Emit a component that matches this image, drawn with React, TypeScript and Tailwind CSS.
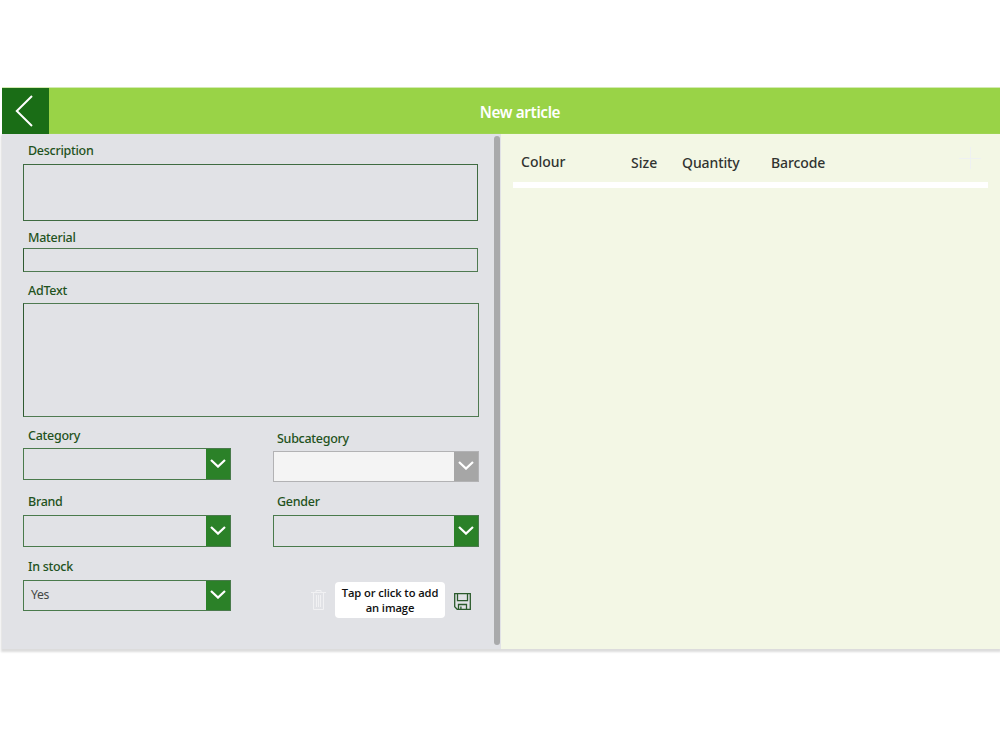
import React from "react";

interface LabelProps {
  text: string;
  className?: string;
}

const Label: React.FC<LabelProps> = ({ text, className = "" }) => {
  return (
    <label
      className={`block h-5 pl-[5px] text-[12.5px] leading-5 font-medium tracking-[-0.28px] text-[#1f5220] whitespace-nowrap ${className}`}
    >
      {text}
    </label>
  );
};

interface DropdownProps {
  value?: string;
  disabled?: boolean;
  className?: string;
}

const Dropdown: React.FC<DropdownProps> = ({
  value = "",
  disabled = false,
  className = "",
}) => {
  return (
    <div
      className={`flex border ${
        disabled ? "border-[#b2b2b4] bg-[#f4f4f4]" : "border-[#4a7a4c]"
      } ${className}`}
    >
      <div className="flex flex-1 items-center pl-[7px] text-[12.2px] tracking-[-0.3px] text-[#444745]">
        {value}
      </div>
      <button
        type="button"
        disabled={disabled}
        className={`flex w-[24px] items-center justify-center ${
          disabled ? "bg-[#a6a6a6]" : "bg-[#2b8128]"
        }`}
      >
        <svg
          className="mb-[2px] h-[9px] w-4"
          viewBox="0 0 16 9"
          fill="none"
          stroke="#ffffff"
          strokeWidth={2.2}
        >
          <path d="M1 1l7 6.6L15 1" />
        </svg>
      </button>
    </div>
  );
};

const Header: React.FC = () => {
  return (
    <header className="flex h-[47px] border-t border-[#d3eab2] bg-[#99d347]">
      <button
        type="button"
        title="Back"
        className="flex w-[47px] items-center justify-center bg-[#1a6d16]"
      >
        <svg
          className="mr-[3px] mb-[1px] h-8 w-[18px]"
          viewBox="0 0 18 32"
          fill="none"
          stroke="#ffffff"
          strokeWidth={2}
        >
          <path d="M17 1L1.8 16L17 31" />
        </svg>
      </button>
      <h1 className="flex-1 pt-px pr-[9px] text-center text-[15.3px] leading-[47px] font-semibold tracking-[-0.38px] text-white">
        New article
      </h1>
    </header>
  );
};

const ArticleForm: React.FC = () => {
  return (
    <form className="w-[492px] pt-[7px] pl-[21px]">
      <Label text="Description" />
      <div className="mt-[3px] h-[57px] w-[455px] border border-[#3f6b41]" />
      <Label text="Material" className="mt-[7px]" />
      <div className="h-[24px] w-[455px] border border-[#4f7a51] border-l-[#2f5a31]" />
      <Label text="AdText" className="mt-[9px]" />
      <div className="mt-[2px] h-[114px] w-[456px] border border-[#4f7a51] border-l-[#2f5a31]" />

      <div className="mt-[9px] flex gap-[42px]">
        <div className="w-[208px]">
          <Label text="Category" />
          <Dropdown className="mt-[2px] h-[32px]" />
          <Label text="Brand" className="mt-[12px]" />
          <Dropdown className="mt-[3px] h-[32px]" />
          <Label text="In stock" className="mt-[10px]" />
          <Dropdown value="Yes" className="mt-[3px] h-[31px]" />
        </div>

        <div className="w-[206px] pt-[3px]">
          <Label text="Subcategory" className="-ml-px" />
          <Dropdown disabled className="mt-[2px] h-[31px]" />
          <Label text="Gender" className="mt-[10px] -ml-px" />
          <Dropdown className="mt-[3px] h-[32px]" />

          <div className="mt-[35px] flex items-center pl-[38px]">
            <svg
              className="h-5 w-[15px]"
              viewBox="0 0 15 20"
              fill="none"
              stroke="#f1f1f3"
              strokeWidth={1}
            >
              <path d="M0 2.5h15M5 2.5v-2h5v2M2.5 2.5v17h10v-17M5.5 5v12M7.5 5v12M9.5 5v12" />
            </svg>
            <button
              type="button"
              className="ml-[9px] h-[36px] w-[110px] rounded-[4px] bg-white font-['Open_Sans',sans-serif] text-[11.2px] leading-[15px] font-semibold tracking-[-0.1px] text-[#101010]"
            >
              Tap or click to add
              <br />
              an image
            </button>
            <svg
              className="mt-[2px] ml-[9px] h-[17px] w-[17px] shrink-0"
              viewBox="0 0 17 17"
              fill="none"
              stroke="#2a5a2b"
              strokeWidth={1.3}
            >
              <path d="M0.7 0.7h15.6v15.6H3.2L0.7 13.8zM3.5 0.7v7h10v-7M4.5 16v-4.5h8v4.5M6.9 16v-2.4" />
            </svg>
          </div>
        </div>
      </div>
    </form>
  );
};

const VariantTable: React.FC = () => {
  return (
    <section className="flex-1 bg-[#f3f7e5] pl-[12px]">
      <div className="flex h-[48px] pt-[19px] text-[14px] leading-5 font-medium text-[#303330]">
        <span className="-mt-px w-[110px] pl-[8px]">Colour</span>
        <span className="w-[51px] pl-[8px]">Size</span>
        <span className="w-[89px] pl-[8px] tracking-[-0.1px]">Quantity</span>
        <span className="pl-[8px] tracking-[-0.1px]">Barcode</span>
        <svg
          className="-mt-[6px] mr-[19px] ml-auto h-[22px] w-[22px]"
          viewBox="0 0 22 22"
          stroke="#eef1f2"
        >
          <path d="M11.5 0v22M0 11.5h22" />
        </svg>
      </div>
      <div className="h-[6px] w-[475px] bg-white" />
    </section>
  );
};

const App: React.FC = () => {
  return (
    <div className="h-[750px] w-[1000px] overflow-hidden bg-white pt-[87px] pl-[2px] font-['Noto_Sans','Open_Sans',sans-serif]">
      <Header />
      <main className="flex h-[515px] bg-[#e1e2e6] shadow-[0_2px_2px_1px_#dcdcdc]">
        <ArticleForm />
        <div className="mt-[2px] mr-px h-[509px] w-[6px] rounded-full bg-[#a9aaab]" />
        <VariantTable />
      </main>
    </div>
  );
};

export default App;
